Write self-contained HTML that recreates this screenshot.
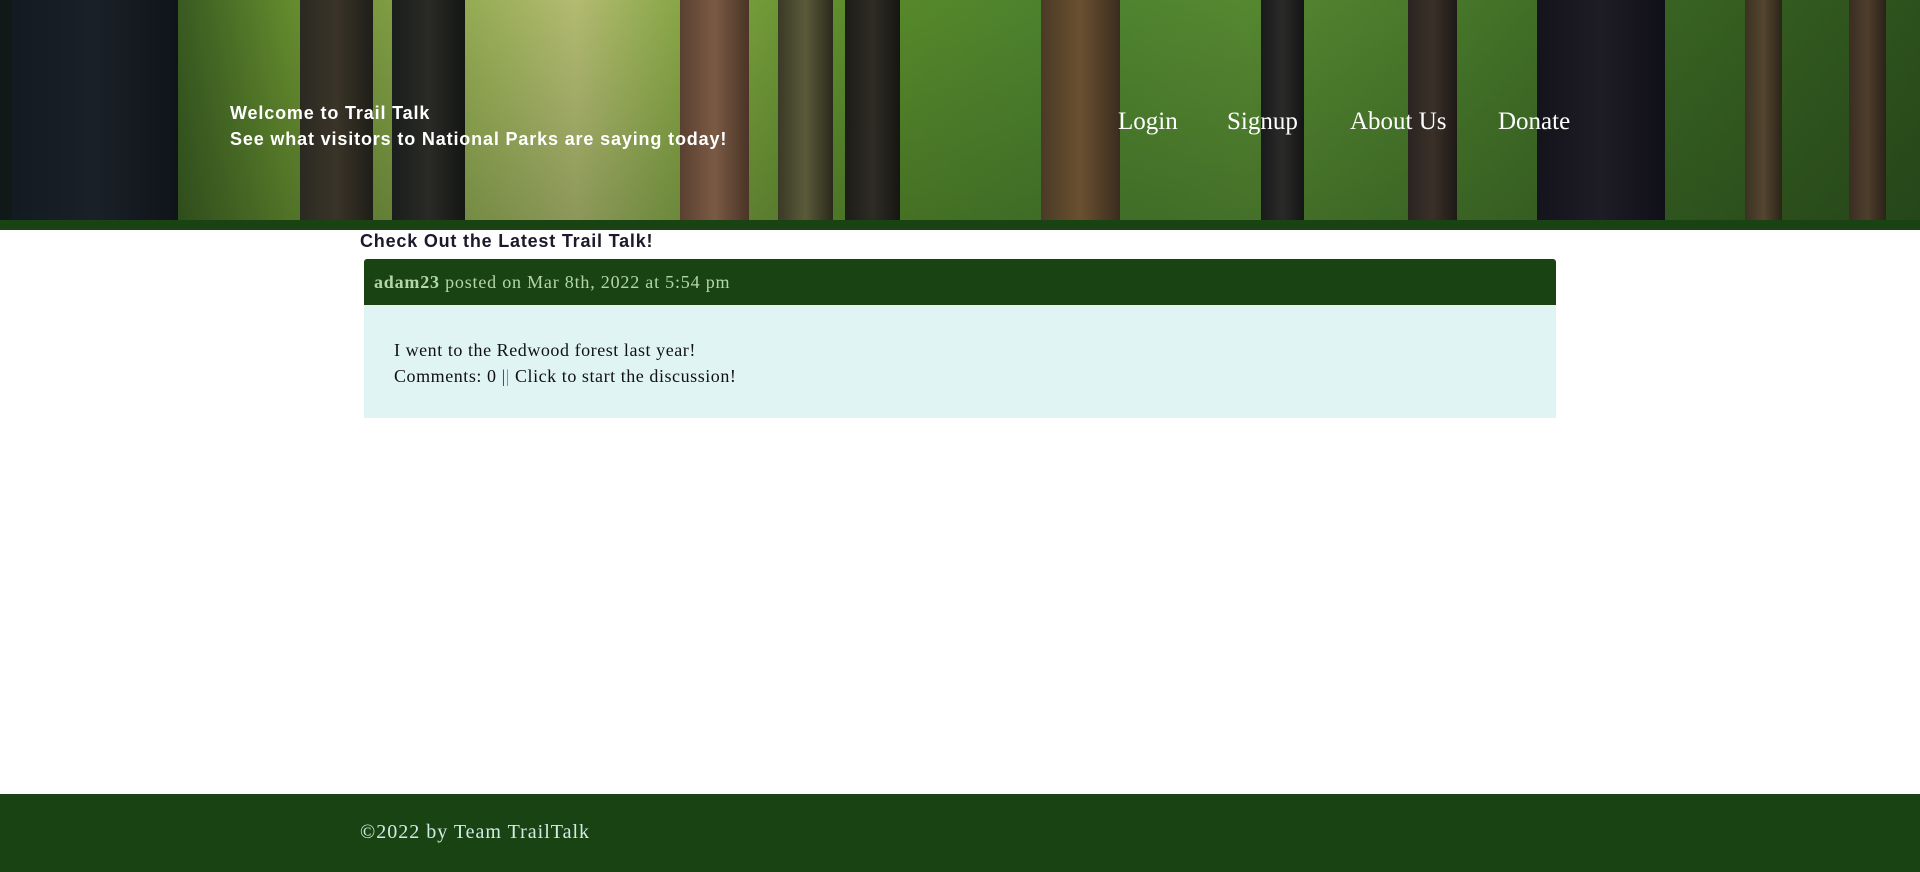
<!DOCTYPE html>
<html><head><meta charset="utf-8"><style>
*{margin:0;padding:0;box-sizing:border-box}
html,body{width:1920px;height:872px;overflow:hidden;background:#fff}
.hero{position:absolute;left:0;top:0;width:1920px;height:220px;overflow:hidden;
background:linear-gradient(90deg,#1a2a18 0%,#2d4a1e 8%,#6a8f30 15%,#a8b860 25%,#c8c880 30%,#8fae48 36%,#5e8f2c 45%,#4f8530 55%,#5a8c34 65%,#4a7a2c 75%,#3a6424 85%,#2a4c1c 100%)}
.hero .shade{position:absolute;inset:0;background:linear-gradient(180deg,rgba(60,110,30,0.15),rgba(30,60,20,0.35))}
.t{position:absolute;top:0;height:220px}
.band{position:absolute;left:0;top:220px;width:1920px;height:10px;background:#1a4314}
.welcome{position:absolute;left:230px;top:100px;color:#fff;font-family:"Liberation Sans",sans-serif;font-weight:bold;font-size:18px;line-height:26px;letter-spacing:0.85px}
.nav{position:absolute;top:108px;font-family:"Liberation Serif",serif;font-size:25px;color:#fff}
h2{position:absolute;left:360px;top:231px;font-family:"Liberation Sans",sans-serif;font-weight:bold;font-size:18px;color:#1a1a2a;letter-spacing:0.8px}
.card{position:absolute;left:364px;top:259px;width:1192px}
.ch{height:46px;background:#1a4314;border-radius:3px 3px 0 0;padding:13px 0 0 10px;font-family:"Liberation Serif",serif;font-size:18px;color:#b5d6a7;letter-spacing:0.8px}
.cb{height:113px;background:#e0f4f3;padding:32px 0 0 30px;font-family:"Liberation Serif",serif;font-size:18px;line-height:26px;color:#111;letter-spacing:0.55px}
.foot{position:absolute;left:0;top:794px;width:1920px;height:78px;background:#1a4314}
.foot span{position:absolute;left:360px;top:27px;font-family:"Liberation Serif",serif;font-size:20px;color:#d3ebe6;letter-spacing:1px}
</style></head><body>
<div class="hero">
<div class="shade"></div>
<div class="t" style="left:0;width:12px;background:#101818"></div>
<div class="t" style="left:12px;width:166px;background:linear-gradient(90deg,#121a22,#1a2028,#0e1418)"></div>
<div class="t" style="left:300px;width:73px;background:linear-gradient(90deg,#2a2a22,#3a3428,#1e1e18)"></div>
<div class="t" style="left:392px;width:73px;background:linear-gradient(90deg,#1a1e1c,#2a2a26,#141614)"></div>
<div class="t" style="left:680px;width:69px;background:linear-gradient(90deg,#5a4030,#7a5a44,#4a3426)"></div>
<div class="t" style="left:778px;width:55px;background:linear-gradient(90deg,#3a3a26,#5a5a3a,#2a2a1c)"></div>
<div class="t" style="left:845px;width:55px;background:linear-gradient(90deg,#1c1c18,#2e2c24,#161612)"></div>
<div class="t" style="left:1041px;width:79px;background:linear-gradient(90deg,#4a3a26,#6a5030,#3a2c1e)"></div>
<div class="t" style="left:1261px;width:43px;background:linear-gradient(90deg,#1a1a1c,#2a2a28,#141416)"></div>
<div class="t" style="left:1408px;width:49px;background:linear-gradient(90deg,#2a2420,#3a3028,#1e1a16)"></div>
<div class="t" style="left:1537px;width:128px;background:linear-gradient(90deg,#14141c,#1e1c24,#101018)"></div>
<div class="t" style="left:1745px;width:37px;background:linear-gradient(90deg,#3a3222,#544630,#2a2418)"></div>
<div class="t" style="left:1849px;width:37px;background:linear-gradient(90deg,#3a2e22,#4e3e2c,#2a2218)"></div>
<div class="welcome">Welcome to Trail Talk<br>See what visitors to National Parks are saying today!</div>
<div class="nav" style="left:1118px">Login</div>
<div class="nav" style="left:1227px">Signup</div>
<div class="nav" style="left:1350px">About Us</div>
<div class="nav" style="left:1498px">Donate</div>
</div>
<div class="band"></div>
<h2>Check Out the Latest Trail Talk!</h2>
<div class="card">
<div class="ch"><b>adam23</b> posted on Mar 8th, 2022 at 5:54 pm</div>
<div class="cb">I went to the Redwood forest last year!<br>Comments: 0 <span style="color:#551a8b">|</span><span style="color:#b8860b">|</span> Click to start the discussion!</div>
</div>
<div class="foot"><span>©2022 by Team TrailTalk</span></div>
</body></html>
